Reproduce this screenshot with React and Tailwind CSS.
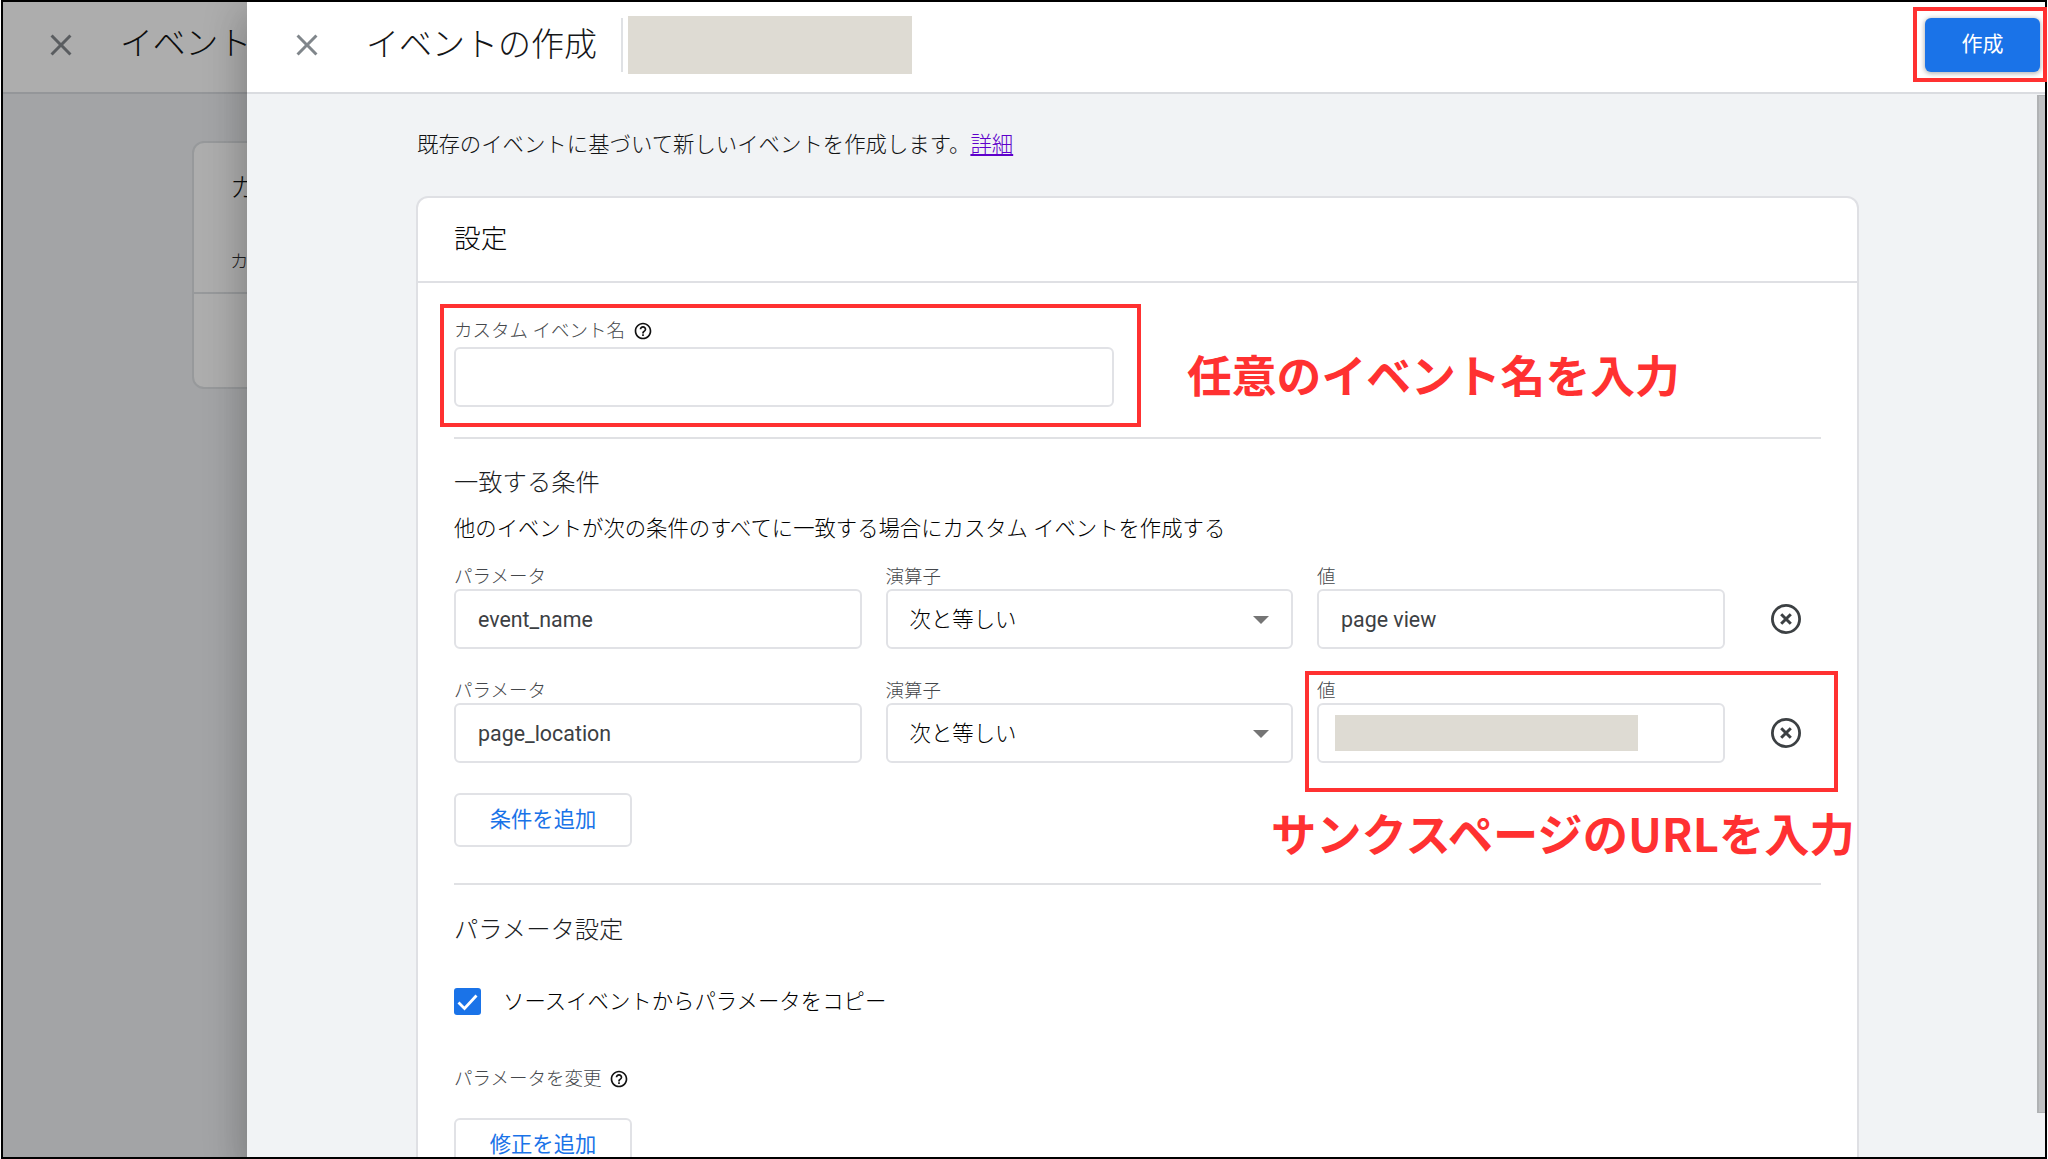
import React, { useState } from 'react'

const conditions = [
  { parameter: 'event_name', operator: '次と等しい', value: 'page view' },
  { parameter: 'page_location', operator: '次と等しい', value: null },
]

const CloseIcon = ({ className }) => (
  <svg viewBox="0 0 24 24" className={className} fill="currentColor">
    <path d="M19 6.41L17.59 5 12 10.59 6.41 5 5 6.41 10.59 12 5 17.59 6.41 19 12 13.41 17.59 19 19 17.59 13.41 12z" />
  </svg>
)

const HelpIcon = () => (
  <svg viewBox="0 0 24 24" className="size-5 text-[#111111]" fill="currentColor">
    <path d="M11 18h2v-2h-2v2zm1-16C6.48 2 2 6.48 2 12s4.48 10 10 10 10-4.48 10-10S17.52 2 12 2zm0 18c-4.41 0-8-3.59-8-8s3.59-8 8-8 8 3.59 8 8-3.59 8-8 8zm0-14c-2.21 0-4 1.79-4 4h2c0-1.1.9-2 2-2s2 .9 2 2c0 2-3 1.75-3 5h2c0-2.25 3-2.5 3-5 0-2.21-1.79-4-4-4z" />
  </svg>
)

const RemoveIcon = () => (
  <svg viewBox="0 0 30 30" className="size-[30px]" fill="none" stroke="#3c4043">
    <circle cx="15" cy="15" r="13.6" strokeWidth="2.8" />
    <path d="M10.2 10.2l9.6 9.6M19.8 10.2l-9.6 9.6" strokeWidth="3" />
  </svg>
)

const Field = ({ label, children }) => (
  <div className="w-[407.5px]">
    <div className="h-6 pt-px text-[18.5px] leading-6 text-[#44474b]">{label}</div>
    <div className="mt-px flex h-[60px] items-center rounded-md border-2 border-[#e1e2e6] px-[22px] text-[21.4px] text-[#3c4043]">
      {children}
    </div>
  </div>
)

const OutlineButton = ({ children }) => (
  <button className="flex h-[54px] w-[178px] items-center justify-center rounded-md border-2 border-[#e1e2e6] text-[21.3px] font-normal text-[#1a73e8]">
    {children}
  </button>
)

// Page that stays visible, dimmed, behind the slide-over panel
const BackgroundPage = () => (
  <div className="w-[244px] shrink-0 overflow-hidden whitespace-nowrap bg-[#a3a4a6]">
    <div className="flex h-23 items-center border-b-2 border-[#949699] bg-[#adadad] pb-[5px] pl-10">
      <CloseIcon className="size-9 shrink-0 text-[#5a5d60]" />
      <span className="ml-[41px] text-[32.8px] font-light text-[#0c0d0e]">イベント</span>
    </div>
    <div className="ml-[189px] mt-[47px] h-[248px] w-[400px] rounded-xl border-2 border-[#97999b] bg-[#adadad]">
      <div className="h-[151px] border-b-2 border-[#97999b] pl-[36px]">
        <div className="pt-[27px] text-[26.5px] font-light leading-9 text-[#0c0d0e]">カ</div>
        <div className="mt-[44px] text-[18.5px] font-light leading-6 text-[#1f2022]">カ</div>
      </div>
    </div>
  </div>
)

const App = () => {
  const [copyParams, setCopyParams] = useState(true)

  return (
    <div className="relative h-[1159px] w-[2048px] overflow-hidden bg-white px-px font-['Roboto','Noto_Sans_CJK_JP',sans-serif]">
      <div className="flex h-[1159px] overflow-hidden border-2 border-black">
        <BackgroundPage />

        <div className="relative flex-1 bg-[#f1f3f5] shadow-[0_21px_32px_3px_rgba(0,0,0,0.14),0_8px_40px_7px_rgba(0,0,0,0.12)]">
          <header className="flex h-23 items-center border-b-2 border-[#dadce0] bg-white pb-1 pl-[42px]">
            <CloseIcon className="size-9 text-[#80868b]" />
            <h1 className="ml-[41px] pb-px text-[33px] font-light text-[#151618]">イベントの作成</h1>
            <div className="ml-[24px] h-[54px] w-0.5 bg-[#dfe1e4]" />
            <div className="ml-[5px] h-[58px] w-[284px] bg-[#dedbd3]" />
            <button className="ml-auto mr-[5px] flex h-[54px] w-[115px] items-center justify-center rounded-md bg-[#1a73e8] text-[21px] text-white shadow-[0_1px_4px_1px_rgba(60,64,67,0.35)]">
              作成
            </button>
          </header>

          <main className="pl-[170px] pt-[35px]">
            <p className="text-[21.4px] font-light leading-8 text-[#111213]">
              既存のイベントに基づいて新しいイベントを作成します。<a href="#" className="text-[#5f00cb] underline">詳細</a>
            </p>

            <section className="-ml-px mt-[35px] h-[1000px] w-[1443px] rounded-xl border-2 border-[#dfe0e4] bg-white">
              <h2 className="flex h-[85px] items-center border-b-2 border-[#dfe0e4] pl-[36px] text-[26.7px] font-light text-[#050505]">設定</h2>

              <div className="pl-[36px] pr-[36px] pt-[36px] font-light">
                <div className="flex h-6 items-center text-[18.5px] text-[#44474b]">
                  <span className="pt-0.5">カスタム イベント名</span>
                  <span className="ml-[8px]"><HelpIcon /></span>
                </div>
                <input className="mt-1 block h-[60px] w-[660px] rounded-md border-2 border-[#e1e2e6]" />
                <hr className="mt-[30px] border-t-2 border-[#e0e1e4]" />

                <h3 className="mt-[28px] text-[24.3px] leading-8 text-[#1b1d1f]">一致する条件</h3>
                <p className="mt-[14px] text-[21.35px] leading-8 text-black">
                  他のイベントが次の条件のすべてに一致する場合にカスタム イベントを作成する
                </p>

                <div className="mt-[19px] flex flex-col gap-[29px]">
                  {conditions.map((item) => (
                    <div key={item.parameter} className="flex items-end gap-6">
                      <Field label="パラメータ">
                        <span className="pt-0.5 font-normal">{item.parameter}</span>
                      </Field>
                      <Field label="演算子">
                        <span className="pt-0.5 text-black">{item.operator}</span>
                        <svg viewBox="0 0 16 8" className="ml-auto mt-px h-2 w-4" fill="#757575">
                          <path d="M0 0h16L8 8z" />
                        </svg>
                      </Field>
                      <Field label="値">
                        {item.value ? (
                          <span className="pt-0.5 font-normal">{item.value}</span>
                        ) : (
                          <div className="-ml-1.5 h-9 w-[303px] bg-[#dedbd3]" />
                        )}
                      </Field>
                      <button className="mb-[15px] ml-[22px]"><RemoveIcon /></button>
                    </div>
                  ))}
                </div>

                <div className="mt-[30px]"><OutlineButton>条件を追加</OutlineButton></div>
                <hr className="mt-[36px] border-t-2 border-[#e0e1e4]" />

                <h3 className="mt-[29px] text-[24.3px] leading-8 text-[#1b1d1f]">パラメータ設定</h3>
                <div className="mt-[42px] flex h-[27px] items-center">
                  <button
                    onClick={() => setCopyParams((prev) => !prev)}
                    className="flex size-[27px] items-center justify-center rounded-[3px] bg-[#1a73e8]"
                    aria-label="ソースイベントからパラメータをコピー"
                  >
                    {copyParams && (
                      <svg viewBox="0 0 27 27" className="size-[27px]" fill="none" stroke="white" strokeWidth="2.8">
                        <path d="M4.5 14.5l6 6L22.5 7.5" />
                      </svg>
                    )}
                  </button>
                  <span className="ml-[22px] pt-px text-[21.4px] text-black">ソースイベントからパラメータをコピー</span>
                </div>

                <div className="mt-[52px] flex h-6 items-center text-[18.5px] text-[#44474b]">
                  <span className="pt-0.5">パラメータを変更</span>
                  <span className="ml-[8px]"><HelpIcon /></span>
                </div>
                <div className="mt-[27px]"><OutlineButton>修正を追加</OutlineButton></div>
              </div>
            </section>
          </main>

          {/* scrollbar thumb */}
          <div className="absolute right-0 top-[93px] h-[1018px] w-2 border-y border-l-2 border-[#b0b2b4] bg-[#bfc1c3]" />
        </div>
      </div>

      {/* callouts */}
      <div className="absolute left-[1913px] top-[7px] h-[75px] w-[134px] border-4 border-[#ff3131]" />
      <div className="absolute left-[440px] top-[304px] h-[123px] w-[701px] border-4 border-[#ff3131]" />
      <div className="absolute left-[1305px] top-[671px] h-[121px] w-[533px] border-4 border-[#ff3131]" />
      <div className="absolute left-[1187px] top-[342px] whitespace-nowrap font-['Noto_Sans_CJK_JP',sans-serif] text-[44.8px] font-bold leading-[64px] text-[#ff3131]">
        任意のイベント名を入力
      </div>
      <div className="absolute left-[1271px] top-[800px] whitespace-nowrap font-['Noto_Sans_CJK_JP',sans-serif] text-[45.3px] font-bold leading-[64px] text-[#ff3131]">
        サンクスページのURLを入力
      </div>
    </div>
  )
}

export default App
